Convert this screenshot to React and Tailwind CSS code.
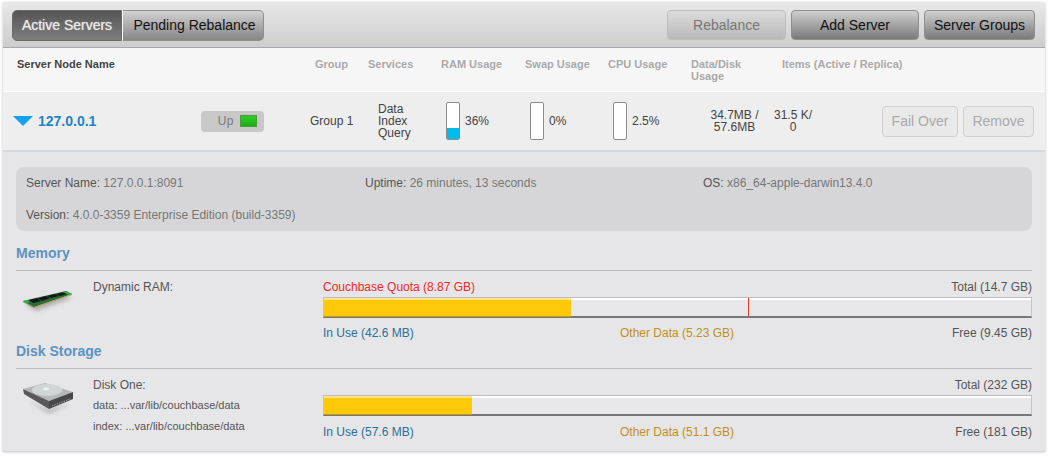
import React from 'react';

function RamIcon() {
  return (
    <svg width="56" height="38" viewBox="0 0 56 38">
      <defs>
        <filter id="ramBlur" x="-20%" y="-50%" width="140%" height="200%">
          <feGaussianBlur stdDeviation="2" />
        </filter>
      </defs>
      <polygon points="5,26 44,17 52,20 16,33" fill="#777" opacity="0.5" filter="url(#ramBlur)" />
      <polygon points="3,23 46,13 52,16 14,29" fill="#2c6a38" />
      <polygon points="14,29 52,16 52,17 14,30" fill="#b9a24a" />
      <polygon points="3,23 14,29 14,30 3,24" fill="#7f8a4a" />
      <polygon points="9,22 17,20 21,23 13,25" fill="#111a14" />
      <polygon points="18,20 26,18 30,20 22,23" fill="#111a14" />
      <polygon points="27,18 35,16 39,18 31,20" fill="#111a14" />
      <polygon points="36,16 43,14.5 47,16 40,18" fill="#111a14" />
      <polygon points="3,23 7,22 10,24 6,25" fill="#2fb04c" />
      <polygon points="46,13 52,16 49,17 43,14" fill="#2fb04c" />
    </svg>
  );
}

function DiskIcon() {
  return (
    <svg width="56" height="38" viewBox="0 0 56 38">
      <defs>
        <filter id="diskBlur" x="-20%" y="-50%" width="140%" height="200%">
          <feGaussianBlur stdDeviation="2" />
        </filter>
      </defs>
      <polygon points="8,24 29,36 52,26 29,33" fill="#666" opacity="0.55" filter="url(#diskBlur)" />
      <polygon points="3,12 25,6 53,15 29,24" fill="#b4b8b8" />
      <polygon points="3,12 29,24 29,32 4,17" fill="#59595b" />
      <polygon points="29,24 53,15 53,22 29,32" fill="#48484a" />
      <ellipse cx="27" cy="13" rx="15" ry="6" fill="#d2d5d5" />
      <ellipse cx="26" cy="12" rx="3" ry="1.4" fill="#eef0f0" />
      <line x1="32" y1="29" x2="51" y2="21.5" stroke="#b0b0b0" strokeWidth="0.9" strokeDasharray="1.5 1" />
    </svg>
  );
}

function Toolbtn({ children, disabled, className }) {
  return (
    <div
      className={
        'h-[30px] flex items-center justify-center rounded-[4px] border text-[14px] ' +
        (disabled
          ? 'border-[#bdbdbd] bg-gradient-to-b from-[#dcdcdc] to-[#b9b9b9] text-[#777] '
          : 'border-[#8f8f8f] bg-gradient-to-b from-[#d0d0d0] to-[#7a7a7a] text-[#111] ') +
        className
      }
    >
      {children}
    </div>
  );
}

function UsageBar({ pct, label, fill }) {
  return (
    <div className="flex items-center gap-[5px]">
      <div className="w-[14px] h-[38px] bg-white border border-[#8c8c8c] rounded-[2px] flex flex-col justify-end overflow-hidden">
        {fill && <div className="bg-[#00bbea]" style={{ height: pct }} />}
      </div>
      <span>{label}</span>
    </div>
  );
}

function Meter({ used, marker }) {
  return (
    <div className="relative h-[21px] bg-[#e8e8ea] border border-[#c4c4c4] border-t-[#bdbdbd] border-r-[#c4c4c4] border-b-[2px] border-b-[#77777a] flex">
      <div className="absolute left-0 right-0 top-0 h-[2px] bg-white" />
      <div
        className="relative h-full bg-[#fec90b] border-t-[2px] border-t-[#fde38a] shadow-[0_1px_0_#c49b10]"
        style={{ width: used }}
      />
      {marker && <div className="absolute top-0 bottom-0 w-px bg-[#e8361a]" style={{ left: marker }} />}
    </div>
  );
}

function SectionTitle({ children, className }) {
  return (
    <div className={'text-[14px] leading-[17px] font-bold text-[#5a94c2] ' + className}>
      {children}
    </div>
  );
}

export default function App() {
  return (
    <div className="w-[1050px] h-[458px] bg-white pt-[3px] pl-[3px] font-['Liberation_Sans',Arial,sans-serif] text-[12px] text-[#555]">
      <div className="w-[1042px] h-[449px] shadow-[0_0_3px_rgba(0,0,0,0.25)] flex flex-col">
        {/* toolbar */}
        <div className="h-[45px] shrink-0 border-b border-b-[#a8a8ae] bg-gradient-to-b from-[#e8e8e8] to-[#cdcdcd] flex items-center pl-[9px] pr-[10px]">
          <div className="w-[110px] h-[31px] flex items-center justify-center rounded-l-[5px] border border-[#6a6a6a] bg-gradient-to-b from-[#555] to-[#7e7e7e] text-[14px] text-[#e8e8e8] [text-shadow:0_0_1px_#ddd]">
            Active Servers
          </div>
          <div className="w-[142px] h-[31px] flex items-center justify-center pl-[3px] rounded-r-[5px] border border-[#8f8f8f] border-l-white bg-gradient-to-b from-[#d2d2d2] to-[#878787] text-[14px] text-[#111]">
            Pending Rebalance
          </div>
          <div className="flex-1" />
          <Toolbtn disabled className="w-[119px]">Rebalance</Toolbtn>
          <Toolbtn className="w-[128px] ml-[5px]">Add Server</Toolbtn>
          <Toolbtn className="w-[111px] ml-[5px]">Server Groups</Toolbtn>
        </div>

        {/* table head */}
        <div className="h-[44px] shrink-0 border-b border-b-white bg-[#f6f6f6] flex pt-[10px] pl-[14px] text-[11px] leading-[12px] font-bold text-[#aaa]">
          <div className="w-[298px] text-[#444]">Server Node Name</div>
          <div className="w-[53px]">Group</div>
          <div className="w-[73px]">Services</div>
          <div className="w-[84px]">RAM Usage</div>
          <div className="w-[83px]">Swap Usage</div>
          <div className="w-[83px]">CPU Usage</div>
          <div className="w-[91px]">Data/Disk<br />Usage</div>
          <div>Items (Active / Replica)</div>
        </div>

        {/* server row */}
        <div className="h-[60px] shrink-0 border-b-[2px] border-b-[#d6d9db] bg-[#eeeeee] flex items-center pl-[10px] text-[#444]">
          <div className="w-0 h-0 border-l-[10px] border-r-[10px] border-t-[10px] border-l-transparent border-r-transparent border-t-[#19a0ec]" />
          <div className="w-[168px] pl-[5px] text-[14px] font-bold text-[#1c85c8]">127.0.0.1</div>
          <div className="w-[63px] h-[21px] rounded-[4px] bg-[#c8c8c8] flex items-center justify-end gap-[6px] pr-[7px] text-[#777]">
            <span className="tracking-[0.5px]">Up</span>
            <div className="w-[17px] h-[12px] bg-gradient-to-b from-[#34cc2c] to-[#18ae14] border border-[#4a9a40]" />
          </div>
          <div className="w-[68px] ml-[46px]">Group 1</div>
          <div className="w-[68px] leading-[12px]">
            Data<br />Index<br />Query
          </div>
          <div className="w-[84px]"><UsageBar pct="31%" label="36%" fill /></div>
          <div className="w-[83px]"><UsageBar label="0%" /></div>
          <div className="w-[83px]"><UsageBar label="2.5%" /></div>
          <div className="w-[77px] text-center leading-[12px]">34.7MB /<br />57.6MB</div>
          <div className="w-[40px] text-center leading-[12px]">31.5 K/<br />0</div>
          <div className="w-[76px] h-[31px] ml-[69px] flex items-center justify-center rounded-[4px] border border-[#cfcfcf] bg-[#e9e9e9] text-[14px] text-[#aaa]">
            Fail Over
          </div>
          <div className="w-[71px] h-[31px] ml-[5px] flex items-center justify-center rounded-[4px] border border-[#cfcfcf] bg-[#e9e9e9] text-[14px] text-[#aaa]">
            Remove
          </div>
        </div>

        {/* details */}
        <div className="flex-1 bg-[#e6e6e8] border-b border-b-[#d4d8db] pt-[15px] pl-[13px] pr-[13px]">
          <div className="h-[64px] w-[1016px] rounded-[8px] bg-[#d6d6d8] pt-[10px] pl-[10px] text-[#777] leading-[12px]">
            <div className="flex">
              <div className="w-[339px]"><span className="text-[#555]">Server Name:</span> 127.0.0.1:8091</div>
              <div className="w-[338px]"><span className="text-[#555]">Uptime:</span> 26 minutes, 13 seconds</div>
              <div><span className="text-[#555]">OS:</span> x86_64-apple-darwin13.4.0</div>
            </div>
            <div className="mt-[20px]"><span className="text-[#555]">Version:</span> 4.0.0-3359 Enterprise Edition (build-3359)</div>
          </div>

          <SectionTitle className="mt-[14px]">Memory</SectionTitle>
          <div className="h-[90px] w-[1016px] mt-[8px] border-t border-t-[#bcbcbe] flex">
            <div className="w-[77px] pl-[4px] pt-[7px]"><RamIcon /></div>
            <div className="w-[230px] pt-[9px] leading-[14px]">Dynamic RAM:</div>
            <div className="flex-1 pt-[9px] leading-[14px]">
              <div className="flex justify-between">
                <span className="text-[#ee2a22]">Couchbase Quota (8.87 GB)</span>
                <span>Total (14.7 GB)</span>
              </div>
              <div className="mt-[3px]"><Meter used="247px" marker="424px" /></div>
              <div className="flex mt-[8px]">
                <span className="w-[297px] text-[#2b6f9c]">In Use (42.6 MB)</span>
                <span className="flex-1 text-[#c2901a]">Other Data (5.23 GB)</span>
                <span>Free (9.45 GB)</span>
              </div>
            </div>
          </div>

          <SectionTitle className="-mt-[17px]">Disk Storage</SectionTitle>
          <div className="w-[1016px] mt-[8px] border-t border-t-[#bcbcbe] flex">
            <div className="w-[77px] pl-[4px] pt-[8px]"><DiskIcon /></div>
            <div className="w-[230px] pt-[9px] leading-[14px]">
              <div>Disk One:</div>
              <div className="mt-[6px] text-[11px]">data: ...var/lib/couchbase/data</div>
              <div className="mt-[7px] text-[11px]">index: ...var/lib/couchbase/data</div>
            </div>
            <div className="flex-1 pt-[9px] leading-[14px]">
              <div className="flex justify-end"><span>Total (232 GB)</span></div>
              <div className="mt-[3px]"><Meter used="148px" /></div>
              <div className="flex mt-[9px]">
                <span className="w-[297px] text-[#2b6f9c]">In Use (57.6 MB)</span>
                <span className="flex-1 text-[#c2901a]">Other Data (51.1 GB)</span>
                <span>Free (181 GB)</span>
              </div>
            </div>
          </div>
        </div>
      </div>
    </div>
  );
}
